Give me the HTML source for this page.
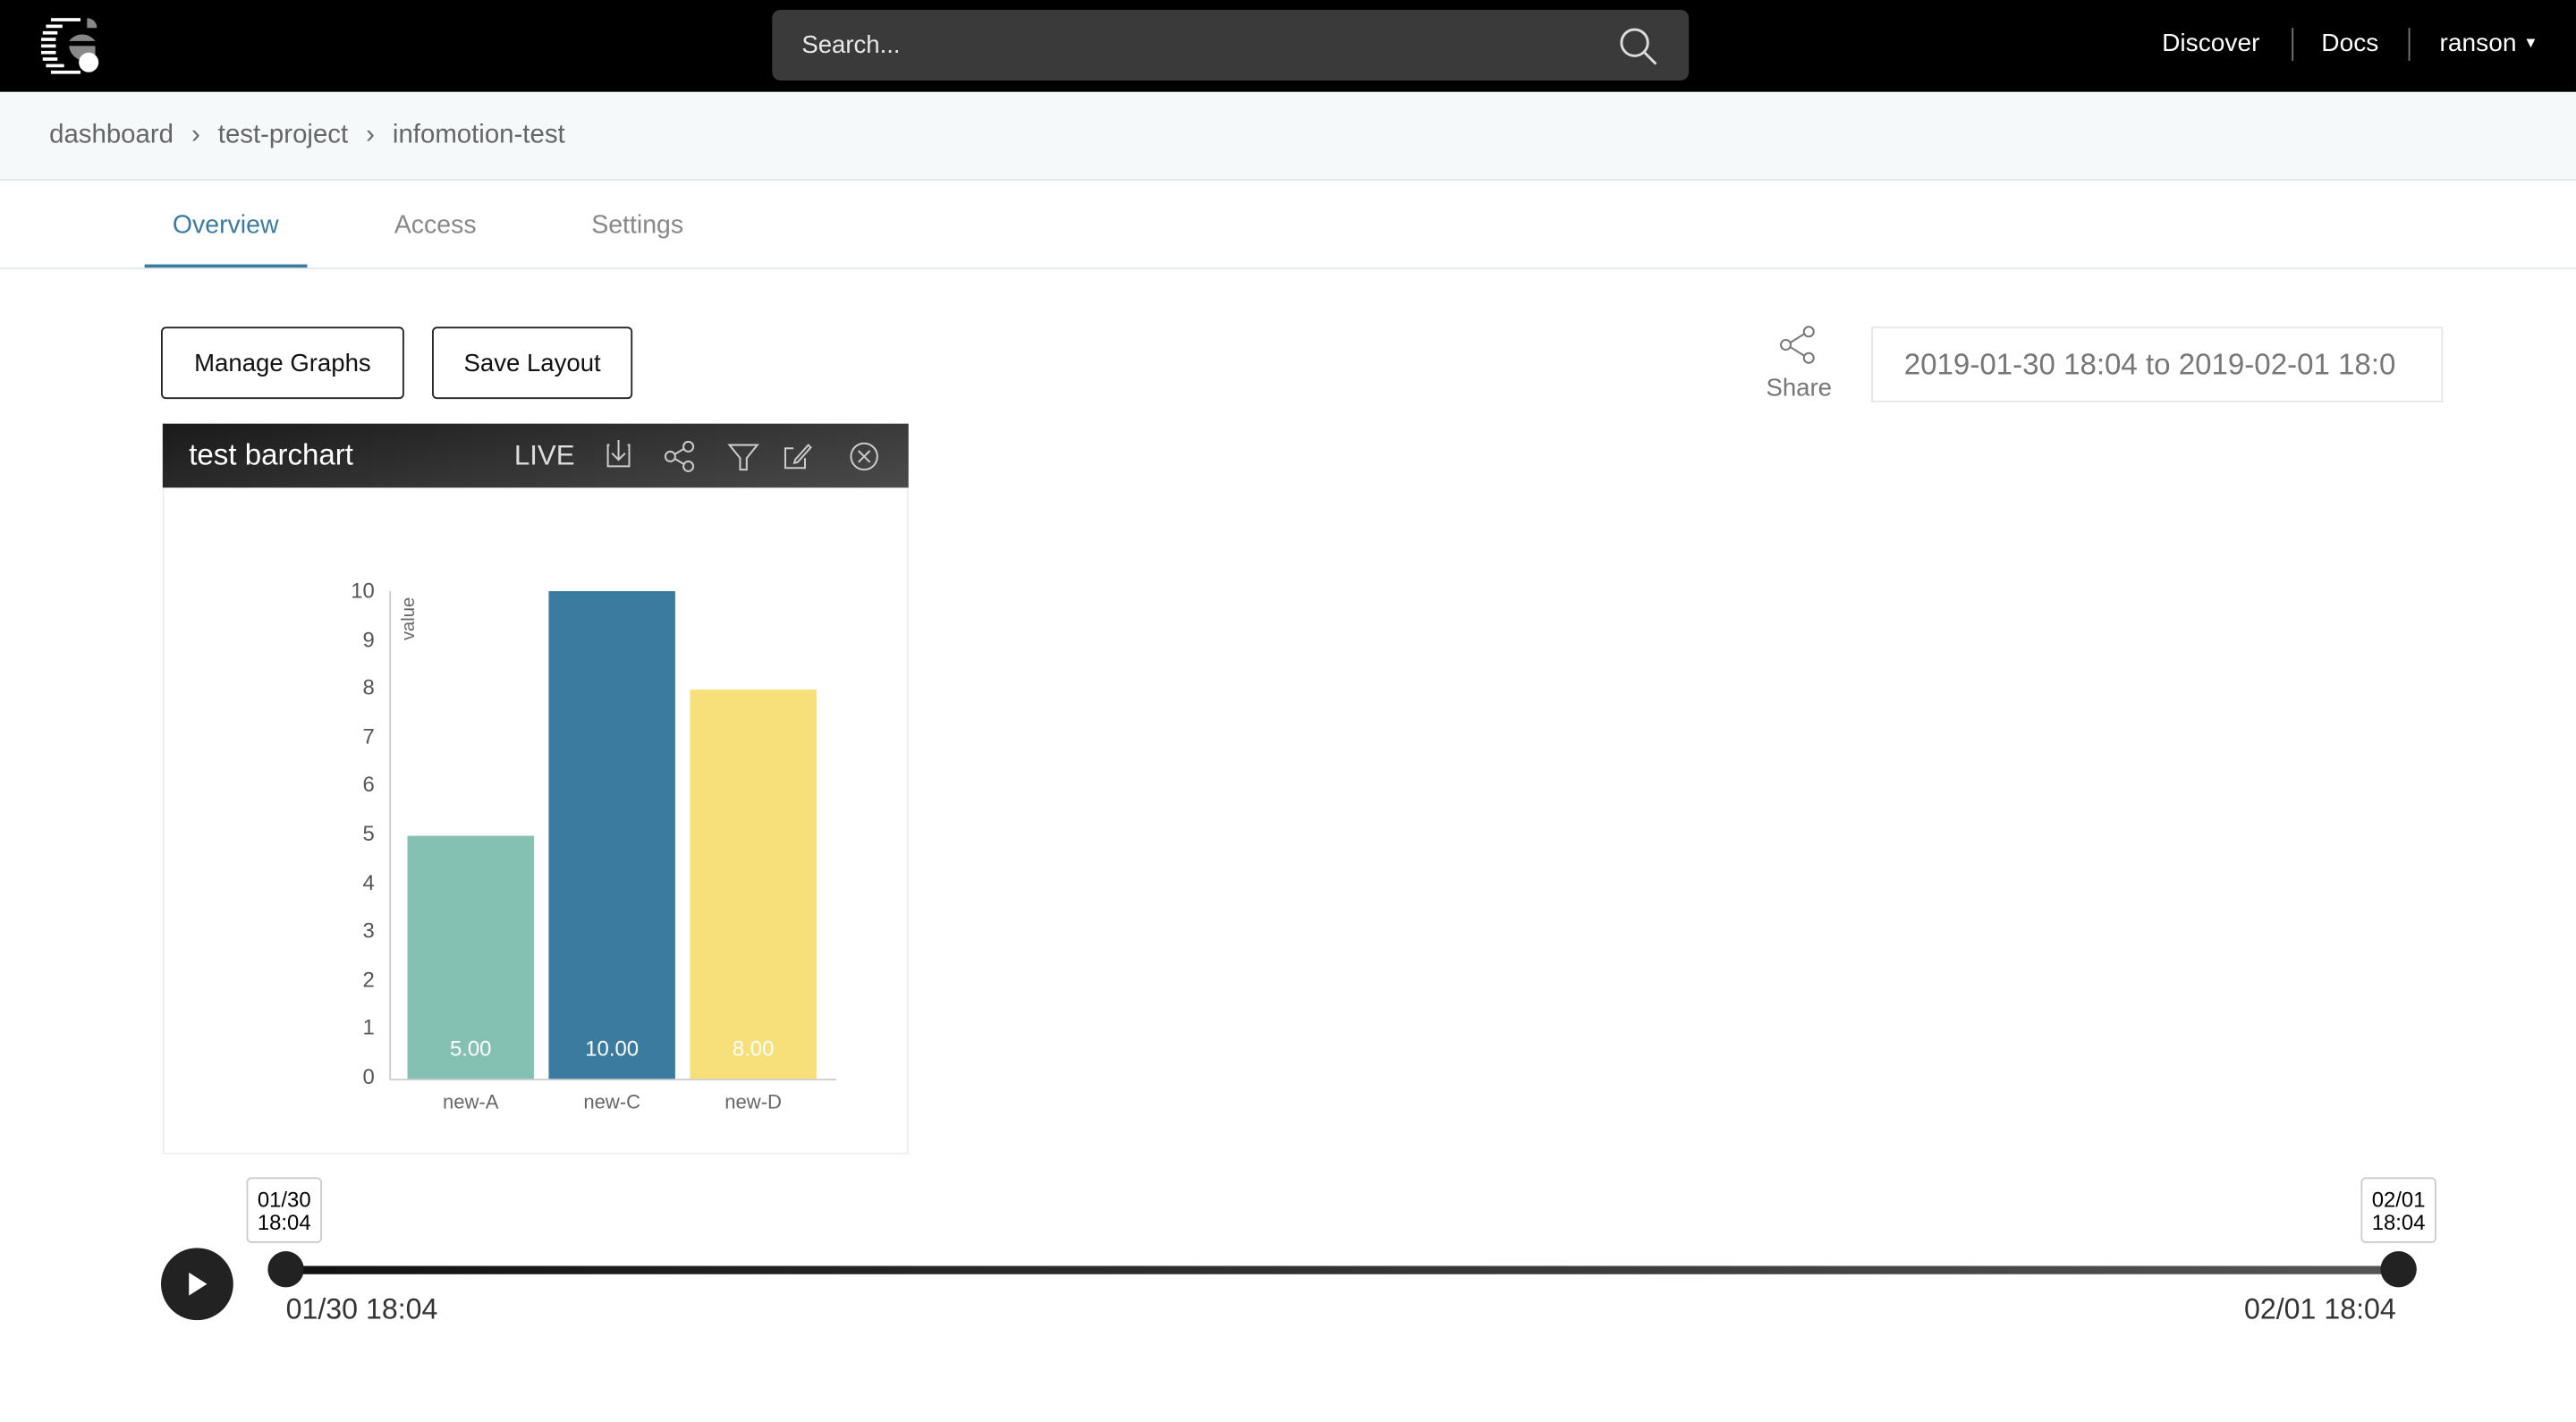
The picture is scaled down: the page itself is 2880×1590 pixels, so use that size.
<!DOCTYPE html>
<html><head><meta charset="utf-8"><style>
html,body{margin:0;padding:0;background:#fff;overflow:hidden}
body{width:2880px;height:1590px}
#w{position:absolute;left:0;top:0;width:1568px;height:866px;transform:scale(1.83673,1.8360);transform-origin:0 0;font-family:"Liberation Sans",sans-serif}
.a{position:absolute}
.top{left:0;top:0;width:1568px;height:56px;background:#000}
.search{left:470px;top:6px;width:558px;height:43px;background:#3a3a3a;border-radius:5px;color:#e8e8e8;font-size:15px;line-height:43px;box-sizing:border-box;padding-left:18px}
.nav{color:#fff;font-size:15.3px;top:18px}
.crumb{left:0;top:56px;width:1568px;height:53px;background:#f6f9fa;border-bottom:1px solid #e4e8ea}
.btn{border:1px solid #222;border-radius:3px;height:44px;line-height:44px;font-size:15px;color:#111;text-align:center;box-sizing:border-box}
.ax{font-size:13px;color:#555;text-align:right;width:20px;left:208px}
</style></head><body><div id="w">
<div class="a top"></div>
<svg class="a" style="left:25px;top:10px" width="38" height="36" viewBox="0 0 38 36">
<g fill="#fff"><rect x="6" y="1" width="18" height="2"/><rect x="3" y="5" width="10" height="2"/><rect x="1" y="9" width="9" height="2"/><rect x="0" y="13" width="9" height="2"/><rect x="0" y="17" width="9" height="2"/><rect x="0" y="21" width="9" height="2"/><rect x="1" y="25" width="9" height="2"/><rect x="3" y="29" width="11" height="2"/><rect x="6" y="33" width="18" height="2"/></g>
<path d="M17 15 A10 10 0 0 1 33 15 Z" fill="#888"/><path d="M17 18 H33 V25 A10 10 0 0 1 17 18Z" fill="#888"/><path d="M28 1 A6 6 0 0 1 34 7 H28Z" fill="#888"/>
<circle cx="29" cy="28" r="6" fill="#fff"/></svg>
<div class="a search">Search...</div>
<svg class="a" style="left:985px;top:16px" width="24" height="24" viewBox="0 0 24 24" fill="none" stroke="#ddd" stroke-width="1.6"><circle cx="10" cy="10" r="8"/><path d="M16 16l7 7"/></svg>
<div class="a nav" style="left:1316px">Discover</div>
<div class="a" style="left:1395px;top:17px;width:1px;height:20px;background:#777"></div>
<div class="a nav" style="left:1413px">Docs</div>
<div class="a" style="left:1466px;top:17px;width:1px;height:20px;background:#777"></div>
<div class="a nav" style="left:1485px">ranson <span style="font-size:9px;vertical-align:2px">▼</span></div>
<div class="a crumb"></div>
<div class="a" style="left:30px;top:74px;font-size:16px;color:#666;word-spacing:1px">dashboard &nbsp;›&nbsp; test-project &nbsp;›&nbsp; infomotion-test</div>
<div class="a" style="left:0;top:163px;width:1568px;height:1px;background:#e4e8ea"></div>
<div class="a" style="left:105px;top:129px;font-size:15.5px;color:#3a7ca0">Overview</div>
<div class="a" style="left:88px;top:161px;width:99px;height:2px;background:#3a7ca0"></div>
<div class="a" style="left:240px;top:129px;font-size:15.5px;color:#888">Access</div>
<div class="a" style="left:360px;top:129px;font-size:15.5px;color:#888">Settings</div>
<div class="a btn" style="left:98px;top:199px;width:148px">Manage Graphs</div>
<div class="a btn" style="left:263px;top:199px;width:122px">Save Layout</div>
<svg class="a" style="left:1082px;top:197px" width="26" height="26" viewBox="0 0 26 26" fill="none" stroke="#777" stroke-width="1.1"><circle cx="19" cy="5" r="3"/><circle cx="5" cy="13" r="3"/><circle cx="19" cy="21" r="3"/><path d="M8 11.5l8-5M8 14.5l8 5"/></svg>
<div class="a" style="left:1075px;top:228px;font-size:15px;color:#777">Share</div>
<div class="a" style="left:1139px;top:199px;width:348px;height:46px;border:1px solid #e6e6e6;box-sizing:border-box;font-size:18px;color:#777;line-height:44px;padding-left:19px;overflow:hidden;white-space:nowrap">2019-01-30 18:04 to 2019-02-01 18:0</div>
<div class="a" style="left:99px;top:258px;width:454px;height:445px;border:1px solid #eee;box-sizing:border-box"></div>
<div class="a" style="left:99px;top:258px;width:454px;height:39px;background:linear-gradient(170deg,#1a1a1a,#4a4a4a)"></div>
<div class="a" style="left:115px;top:267px;font-size:18px;color:#fff">test barchart</div>
<div class="a" style="left:313px;top:268px;font-size:17px;color:#ddd">LIVE</div>
<svg class="a" style="left:365px;top:266px" width="180" height="24" viewBox="0 0 180 24" fill="none" stroke="#ccc" stroke-width="1.1">
<path d="M6 5H5V18H18V5H17M11.5 2V14M7.5 10l4 4 4-4"/>
<circle cx="43" cy="12" r="3"/><circle cx="54" cy="6" r="3"/><circle cx="54" cy="18" r="3"/><path d="M46 10.5l5-3M46 13.5l5 3"/>
<path d="M79 5H96L89.5 13V20H85.5V13Z"/>
<path d="M118 7H113V19H125V13M119 14l8-9 1.5 1.5-8 9-2 .5z"/>
<circle cx="161" cy="12" r="8"/><path d="M157.5 8.5l7 7M164.5 8.5l-7 7"/></svg>
<div class="a" style="left:237px;top:360px;width:1px;height:297px;background:#ccc"></div>
<div class="a" style="left:237px;top:657px;width:272px;height:1px;background:#ccc"></div>
<div class="a ax" style="top:352px">10</div><div class="a ax" style="top:382px">9</div><div class="a ax" style="top:411px">8</div><div class="a ax" style="top:441px">7</div><div class="a ax" style="top:470px">6</div><div class="a ax" style="top:500px">5</div><div class="a ax" style="top:530px">4</div><div class="a ax" style="top:559px">3</div><div class="a ax" style="top:589px">2</div><div class="a ax" style="top:618px">1</div><div class="a ax" style="top:648px">0</div>
<div class="a" style="left:243px;font-size:11px;color:#666;transform:rotate(-90deg);transform-origin:left top;top:390px">value</div>
<div class="a" style="left:248px;top:509px;width:77px;height:148px;background:#84c1b3"></div>
<div class="a" style="left:334px;top:360px;width:77px;height:297px;background:#3b7ba0"></div>
<div class="a" style="left:420px;top:420px;width:77px;height:237px;background:#f7df79"></div>
<div class="a" style="left:248px;top:631px;width:77px;text-align:center;color:#fff;font-size:13px">5.00</div>
<div class="a" style="left:334px;top:631px;width:77px;text-align:center;color:#fff;font-size:13px">10.00</div>
<div class="a" style="left:420px;top:631px;width:77px;text-align:center;color:#fff;font-size:13px">8.00</div>
<div class="a" style="left:248px;top:664px;width:77px;text-align:center;color:#666;font-size:12px">new-A</div>
<div class="a" style="left:334px;top:664px;width:77px;text-align:center;color:#666;font-size:12px">new-C</div>
<div class="a" style="left:420px;top:664px;width:77px;text-align:center;color:#666;font-size:12px">new-D</div>
<div class="a" style="left:150px;top:717px;width:46px;height:40px;border:1px solid #ccc;border-radius:3px;box-sizing:border-box;font-size:13px;text-align:center;line-height:14px;padding-top:6px">01/30<br>18:04</div>
<div class="a" style="left:1437px;top:717px;width:46px;height:40px;border:1px solid #ccc;border-radius:3px;box-sizing:border-box;font-size:13px;text-align:center;line-height:14px;padding-top:6px">02/01<br>18:04</div>
<div class="a" style="left:98px;top:760px;width:44px;height:44px;border-radius:50%;background:#222"></div>
<div class="a" style="left:115px;top:775px;width:0;height:0;border-left:11px solid #fff;border-top:7px solid transparent;border-bottom:7px solid transparent"></div>
<div class="a" style="left:174px;top:771px;width:1286px;height:5px;background:linear-gradient(90deg,#111,#555);border-radius:3px"></div>
<div class="a" style="left:163px;top:762px;width:22px;height:22px;border-radius:50%;background:#222"></div>
<div class="a" style="left:1449px;top:762px;width:22px;height:22px;border-radius:50%;background:#222"></div>
<div class="a" style="left:174px;top:787px;font-size:17.5px;color:#333">01/30 18:04</div>
<div class="a" style="left:1366px;top:787px;font-size:17.5px;color:#333">02/01 18:04</div>
</div></body></html>
